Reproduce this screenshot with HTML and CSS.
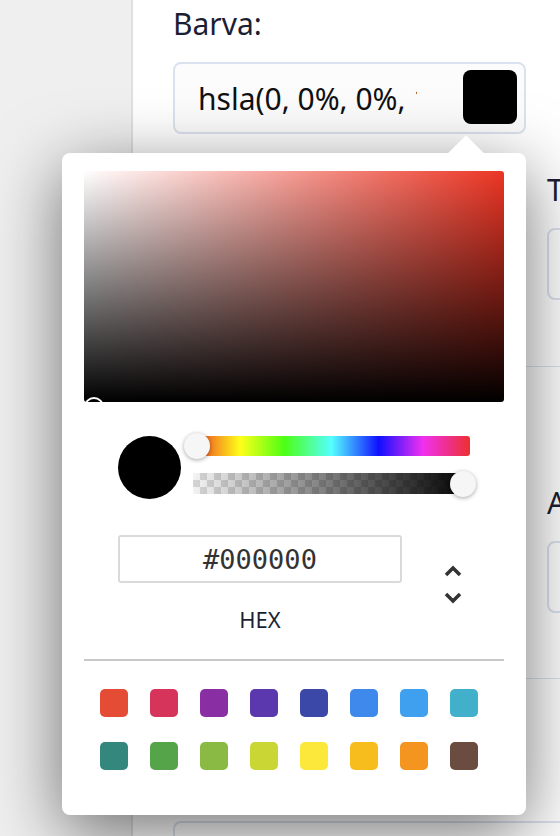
FILE: index.html
```html
<!DOCTYPE html>
<html lang="cs">
<head>
  <meta charset="UTF-8">
  <meta name="viewport" content="width=device-width, initial-scale=1.0">
  <title>Barva</title>
  <link rel="stylesheet" href="styles.css">
</head>
<body>
  <div class="app">
    <aside class="sidebar"></aside>

    <main class="content">
      <section class="section section-first">
        <div class="grid">
          <div class="field">
            <label class="label">Barva:</label>
            <div class="box color-input">
              <span class="color-value">hsla(0, 0%, 0%, 1)</span>
              <span class="color-chip"></span>
            </div>

            <div class="picker">
              <div class="sat">
                <span class="sat-cursor"></span>
              </div>

              <div class="controls">
                <div class="preview"></div>
                <div class="sliders">
                  <div class="hue"><span class="thumb" style="left: 1.5%"></span></div>
                  <div class="alpha"><span class="thumb" style="left: 97.5%"></span></div>
                </div>
              </div>

              <div class="hex-row">
                <div class="hex-field">
                  <input class="hex-input" type="text" value="#000000">
                  <span class="hex-label">HEX</span>
                </div>
                <button class="mode-toggle" type="button">
                  <svg width="20" height="40" viewBox="0 0 20 40">
                    <path d="M3 10 L10 3 L17 10" />
                    <path d="M3 29 L10 36 L17 29" />
                  </svg>
                </button>
              </div>

              <hr class="divider">

              <div class="swatches">
                <span class="swatch" style="background: #e44c35"></span>
                <span class="swatch" style="background: #d6345a"></span>
                <span class="swatch" style="background: #8a2ea3"></span>
                <span class="swatch" style="background: #5b38ae"></span>
                <span class="swatch" style="background: #3c48a8"></span>
                <span class="swatch" style="background: #3f88ec"></span>
                <span class="swatch" style="background: #40a0f0"></span>
                <span class="swatch" style="background: #42afcb"></span>
                <span class="swatch" style="background: #33877c"></span>
                <span class="swatch" style="background: #56a44a"></span>
                <span class="swatch" style="background: #8ab944"></span>
                <span class="swatch" style="background: #c9d634"></span>
                <span class="swatch" style="background: #fce83a"></span>
                <span class="swatch" style="background: #f6bd1c"></span>
                <span class="swatch" style="background: #f3951e"></span>
                <span class="swatch" style="background: #6a4c41"></span>
              </div>
            </div>
          </div>

          <div class="field col-2 row-2">
            <label class="label">Tloušťka:</label>
            <div class="box"></div>
          </div>
        </div>
      </section>

      <section class="section section-spaced">
        <div class="grid">
          <div class="field col-2">
            <label class="label">Animace:</label>
            <div class="box"></div>
          </div>
        </div>
      </section>

      <section class="section section-last">
        <div class="grid">
          <div class="field col-full">
            <div class="box"></div>
          </div>
        </div>
      </section>
    </main>
  </div>
</body>
</html>
```

FILE: styles.css
```css
* {
  box-sizing: border-box;
}

html, body {
  margin: 0;
  height: 100%;
  overflow: hidden;
}

body {
  font-family: 'Noto Sans', sans-serif;
  color: #1c1f33;
  background-color: #fff;
}

.app {
  display: flex;
  height: 100%;
}

.sidebar {
  flex: 0 0 133px;
  background-color: #efefef;
  border-right: 2px solid #dfdfe4;
}

.content {
  flex: 0 0 auto;
  width: 800px;
  padding-left: 40px;
}

.section {
  border-bottom: 1px solid #dde3ee;
  padding-bottom: 65px;
}

.section-first {
  padding-top: 4px;
  padding-bottom: 66px;
}

.section-spaced {
  padding-top: 116px;
}

.section-last {
  padding-top: 142px;
  border-bottom: none;
}

.grid {
  display: grid;
  grid-template-columns: 353px 353px;
  column-gap: 21px;
  row-gap: 36px;
}

.field {
  position: relative;
}

.col-2 {
  grid-column: 2;
}

.row-2 {
  grid-row: 2;
}

.col-full {
  grid-column: 1 / -1;
}

.label {
  display: block;
  font-size: 30px;
  line-height: 40px;
  margin-bottom: 18px;
  white-space: nowrap;
}

.box {
  height: 72px;
  border: 2px solid #dbe2ef;
  border-radius: 8px;
  background-color: #fff;
}

.color-input {
  display: flex;
  align-items: center;
  justify-content: space-between;
  padding: 0 7px 0 23px;
  background-color: #fcfcfd;
}

.color-value {
  width: 219px;
  overflow: hidden;
  white-space: nowrap;
  font-size: 30px;
  color: #111;
}

.color-chip {
  width: 54px;
  height: 54px;
  border-radius: 8px;
  background-color: #000;
  margin-top: -2px;
}

/* color picker popover */

.picker {
  position: absolute;
  z-index: 10;
  left: -111px;
  top: calc(100% + 19px);
  width: 464px;
  padding: 18px 22px 45px;
  background-color: #fff;
  border-radius: 8px;
  box-shadow: 0 18px 70px rgba(0, 0, 0, 0.55);
}

.picker::before {
  content: '';
  position: absolute;
  left: 390px;
  top: -12px;
  width: 28px;
  height: 28px;
  background-color: #fff;
  transform: rotate(45deg);
}

.sat {
  position: relative;
  height: 231px;
  border-radius: 3px;
  overflow: hidden;
  background: linear-gradient(to top, #000, rgba(0, 0, 0, 0)),
              linear-gradient(to right, #fff, #ec3524);
}

.sat-cursor {
  position: absolute;
  left: 0;
  bottom: -15px;
  width: 20px;
  height: 20px;
  border: 2px solid #fff;
  border-radius: 50%;
}

.controls {
  display: flex;
  align-items: flex-start;
  gap: 12px;
  margin-top: 34px;
  padding: 0 34px;
}

.preview {
  flex: 0 0 63px;
  height: 63px;
  border-radius: 50%;
  background-color: #000;
}

.sliders {
  flex: 1;
  display: flex;
  flex-direction: column;
  gap: 17px;
}

.hue,
.alpha {
  position: relative;
}

.hue {
  height: 20px;
  border-radius: 3px;
  background: linear-gradient(to right, #ec3524 0%, #ffff1a 17%, #4cff14 33%, #55ffff 50%, #1010ff 67%, #f030f0 83%, #ec3030 100%);
}

.alpha {
  height: 21px;
  background: linear-gradient(to right, rgba(0, 0, 0, 0), #000),
              repeating-conic-gradient(#d4d4d4 0 25%, #f3f3f3 0 50%) 0 0 / 14px 14px;
}

.thumb {
  position: absolute;
  top: 50%;
  width: 26px;
  height: 26px;
  border-radius: 50%;
  background-color: #f6f6f6;
  box-shadow: 0 1px 4px rgba(0, 0, 0, 0.35);
  transform: translate(-50%, -50%);
}

.hex-row {
  display: flex;
  align-items: center;
  margin-top: 36px;
  padding-left: 34px;
}

.hex-field {
  display: flex;
  flex-direction: column;
  align-items: center;
  width: 284px;
}

.hex-input {
  width: 100%;
  height: 48px;
  padding: 0;
  border: 2px solid #dadada;
  border-radius: 3px;
  font-family: 'DejaVu Sans Mono', monospace;
  font-size: 27px;
  color: #333;
  text-align: center;
}

.hex-label {
  margin-top: 21px;
  font-size: 22px;
  line-height: 30px;
}

.mode-toggle {
  margin-left: 41px;
  padding: 0;
  border: none;
  background: none;
  line-height: 0;
}

.mode-toggle path {
  fill: none;
  stroke: #333;
  stroke-width: 3.5;
}

.divider {
  margin: 25px 0 0;
  border: none;
  border-top: 2px solid #c8c8c8;
}

.swatches {
  display: grid;
  grid-template-columns: repeat(8, 28px);
  column-gap: 22px;
  row-gap: 25px;
  margin-top: 28px;
  padding-left: 16px;
}

.swatch {
  height: 28px;
  border-radius: 5px;
}
```
